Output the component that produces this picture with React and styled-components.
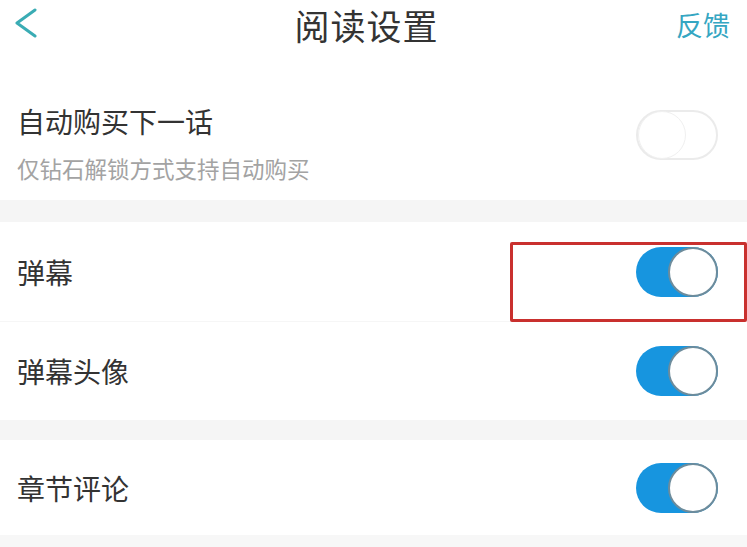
import React from "react";
import styled, { createGlobalStyle } from "styled-components";

const Global = createGlobalStyle`
  html, body { margin: 0; padding: 0; background: #f7f7f7; }
  body { font-family: "Noto Sans CJK SC", "Noto Sans", sans-serif; }
`;

const Page = styled.div`
  width: 747px;
  background: #ffffff;
  display: flex;
  flex-direction: column;
`;

const Header = styled.div`
  height: 50px;
  display: flex;
  align-items: center;
  justify-content: space-between;
  padding: 0 17px 0 14px;
  position: relative;
`;

const BackIcon = styled.svg`
  width: 26px;
  height: 34px;
  display: block;
`;

const Title = styled.div`
  position: absolute;
  left: 0;
  right: 14px;
  text-align: center;
  font-size: 35px;
  line-height: 50px;
  color: #333333;
  pointer-events: none;
  letter-spacing: 1px;
`;

const Feedback = styled.div`
  font-size: 27px;
  line-height: 50px;
  color: #35a6c2;
`;

const Section = styled.div`
  display: flex;
  flex-direction: column;
  background: #fff;
`;

const Gap = styled.div`
  height: ${(p) => p.h}px;
  background: #f5f5f5;
`;

const Row = styled.div`
  position: relative;
  height: ${(p) => p.h}px;
  display: flex;
  align-items: ${(p) => (p.top ? "flex-start" : "center")};
  justify-content: space-between;
  padding: ${(p) => (p.top ? "54px" : "0")} 29px 0 17px;
  box-sizing: border-box;
  border-bottom: ${(p) => (p.divider ? "1px solid #f6f6f6" : "none")};
`;

const TextCol = styled.div`
  display: flex;
  flex-direction: column;
`;

const Label = styled.div`
  font-size: 28px;
  line-height: 34px;
  color: #333333;
`;

const Sub = styled.div`
  margin-top: 16px;
  font-size: 22.5px;
  line-height: 28px;
  color: #a3a3a3;
`;

const Track = styled.div`
  width: 82px;
  height: 50px;
  border-radius: 25px;
  box-sizing: border-box;
  display: flex;
  align-items: center;
  justify-content: ${(p) => (p.on ? "flex-end" : "flex-start")};
  background: ${(p) => (p.on ? "#1795df" : "#ffffff")};
  border: ${(p) => (p.on ? "none" : "2px solid #ebebeb")};
  margin-top: ${(p) => p.mt || 0}px;
`;

const Knob = styled.div`
  width: ${(p) => (p.on ? 50 : 48)}px;
  height: ${(p) => (p.on ? 50 : 48)}px;
  border-radius: 50%;
  box-sizing: border-box;
  background: #ffffff;
  border: ${(p) => (p.on ? "2px solid #6d8c9c" : "1.5px solid #f0f0f0")};
`;

const Highlight = styled.div`
  position: absolute;
  left: 510px;
  top: 20px;
  width: 237px;
  height: 80px;
  box-sizing: border-box;
  border: 3px solid #c9302e;
  border-radius: 2px;
`;

const Toggle = ({ on, mt }) => (
  <Track on={on} mt={mt}>
    <Knob on={on} />
  </Track>
);

export default function App() {
  return (
    <>
      <Global />
      <Page>
        <Header>
          <BackIcon viewBox="0 0 26 34">
            <polyline
              points="21,2 3,15 21,28"
              fill="none"
              stroke="#3aacb4"
              strokeWidth="3"
              strokeLinecap="round"
              strokeLinejoin="round"
            />
          </BackIcon>
          <Title>阅读设置</Title>
          <Feedback>反馈</Feedback>
        </Header>
        <Section>
          <Row h={150} top>
            <TextCol>
              <Label>自动购买下一话</Label>
              <Sub>仅钻石解锁方式支持自动购买</Sub>
            </TextCol>
            <Toggle mt={6} />
          </Row>
        </Section>
        <Gap h={22} />
        <Section>
          <Row h={100} divider>
            <Label>弹幕</Label>
            <Toggle on />
            <Highlight />
          </Row>
          <Row h={98}>
            <Label>弹幕头像</Label>
            <Toggle on />
          </Row>
        </Section>
        <Gap h={20} />
        <Section>
          <Row h={95}>
            <Label>章节评论</Label>
            <Toggle on />
          </Row>
        </Section>
      </Page>
    </>
  );
}
